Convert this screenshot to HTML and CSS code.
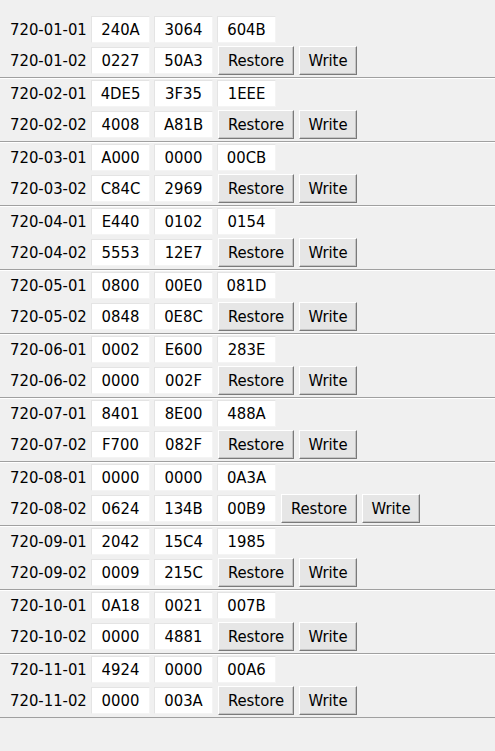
FILE: index.html
```html
<!DOCTYPE html>
<html>
<head>
<meta charset="utf-8">
<link rel="stylesheet" href="styles.css">
</head>
<body>
<div class="list">
  <div class="group">
    <div class="row"><span class="label">720-01-01</span><span class="cell">240A</span><span class="cell">3064</span><span class="cell">604B</span></div>
    <div class="row"><span class="label">720-01-02</span><span class="cell">0227</span><span class="cell">50A3</span><button class="btn restore">Restore</button><button class="btn write">Write</button></div>
  </div>
  <div class="group">
    <div class="row"><span class="label">720-02-01</span><span class="cell">4DE5</span><span class="cell">3F35</span><span class="cell">1EEE</span></div>
    <div class="row"><span class="label">720-02-02</span><span class="cell">4008</span><span class="cell">A81B</span><button class="btn restore">Restore</button><button class="btn write">Write</button></div>
  </div>
  <div class="group">
    <div class="row"><span class="label">720-03-01</span><span class="cell">A000</span><span class="cell">0000</span><span class="cell">00CB</span></div>
    <div class="row"><span class="label">720-03-02</span><span class="cell">C84C</span><span class="cell">2969</span><button class="btn restore">Restore</button><button class="btn write">Write</button></div>
  </div>
  <div class="group">
    <div class="row"><span class="label">720-04-01</span><span class="cell">E440</span><span class="cell">0102</span><span class="cell">0154</span></div>
    <div class="row"><span class="label">720-04-02</span><span class="cell">5553</span><span class="cell">12E7</span><button class="btn restore">Restore</button><button class="btn write">Write</button></div>
  </div>
  <div class="group">
    <div class="row"><span class="label">720-05-01</span><span class="cell">0800</span><span class="cell">00E0</span><span class="cell">081D</span></div>
    <div class="row"><span class="label">720-05-02</span><span class="cell">0848</span><span class="cell">0E8C</span><button class="btn restore">Restore</button><button class="btn write">Write</button></div>
  </div>
  <div class="group">
    <div class="row"><span class="label">720-06-01</span><span class="cell">0002</span><span class="cell">E600</span><span class="cell">283E</span></div>
    <div class="row"><span class="label">720-06-02</span><span class="cell">0000</span><span class="cell">002F</span><button class="btn restore">Restore</button><button class="btn write">Write</button></div>
  </div>
  <div class="group">
    <div class="row"><span class="label">720-07-01</span><span class="cell">8401</span><span class="cell">8E00</span><span class="cell">488A</span></div>
    <div class="row"><span class="label">720-07-02</span><span class="cell">F700</span><span class="cell">082F</span><button class="btn restore">Restore</button><button class="btn write">Write</button></div>
  </div>
  <div class="group">
    <div class="row"><span class="label">720-08-01</span><span class="cell">0000</span><span class="cell">0000</span><span class="cell">0A3A</span></div>
    <div class="row"><span class="label">720-08-02</span><span class="cell">0624</span><span class="cell">134B</span><span class="cell">00B9</span><button class="btn restore">Restore</button><button class="btn write">Write</button></div>
  </div>
  <div class="group">
    <div class="row"><span class="label">720-09-01</span><span class="cell">2042</span><span class="cell">15C4</span><span class="cell">1985</span></div>
    <div class="row"><span class="label">720-09-02</span><span class="cell">0009</span><span class="cell">215C</span><button class="btn restore">Restore</button><button class="btn write">Write</button></div>
  </div>
  <div class="group">
    <div class="row"><span class="label">720-10-01</span><span class="cell">0A18</span><span class="cell">0021</span><span class="cell">007B</span></div>
    <div class="row"><span class="label">720-10-02</span><span class="cell">0000</span><span class="cell">4881</span><button class="btn restore">Restore</button><button class="btn write">Write</button></div>
  </div>
  <div class="group">
    <div class="row"><span class="label">720-11-01</span><span class="cell">4924</span><span class="cell">0000</span><span class="cell">00A6</span></div>
    <div class="row"><span class="label">720-11-02</span><span class="cell">0000</span><span class="cell">003A</span><button class="btn restore">Restore</button><button class="btn write">Write</button></div>
  </div>
</div>
</body>
</html>
```

FILE: styles.css
```css
html, body {
  margin: 0;
  padding: 0;
  background: #f0f0f0;
}
body {
  font-family: "DejaVu Sans Condensed", "DejaVu Sans", sans-serif;
  font-stretch: condensed;
  font-size: 16.5px;
  color: #000000;
}
.list {
  padding-top: 15px;
}
.group {
  display: flex;
  flex-direction: column;
  gap: 2px;
  padding-bottom: 2px;
  border-bottom: 1px solid #a0a0a0;
}
.group + .group {
  border-top: 1px solid #ffffff;
}
.row {
  display: flex;
  align-items: center;
  gap: 4px;
  height: 29px;
  padding-left: 10px;
}
.label {
  width: 77px;
  line-height: 27px;
}
.cell {
  box-sizing: border-box;
  width: 59px;
  height: 27px;
  line-height: 25px;
  text-align: center;
  background: #ffffff;
  border: 1px solid #e4e4e4;
  border-right-color: #f4f4f4;
  border-bottom-color: #f4f4f4;
}
.btn {
  box-sizing: border-box;
  height: 29px;
  margin: 0;
  padding: 0;
  font: inherit;
  color: #000000;
  background: #e6e6e6;
  border: 1px solid;
  border-color: #ffffff #7a7a7a #7a7a7a #ffffff;
  box-shadow: inset -1px -1px 0 #c4c4c4;
  text-align: center;
}
.restore {
  width: 76px;
  margin-left: 1px;
}
.write {
  width: 58px;
  margin-left: 1px;
}
```
